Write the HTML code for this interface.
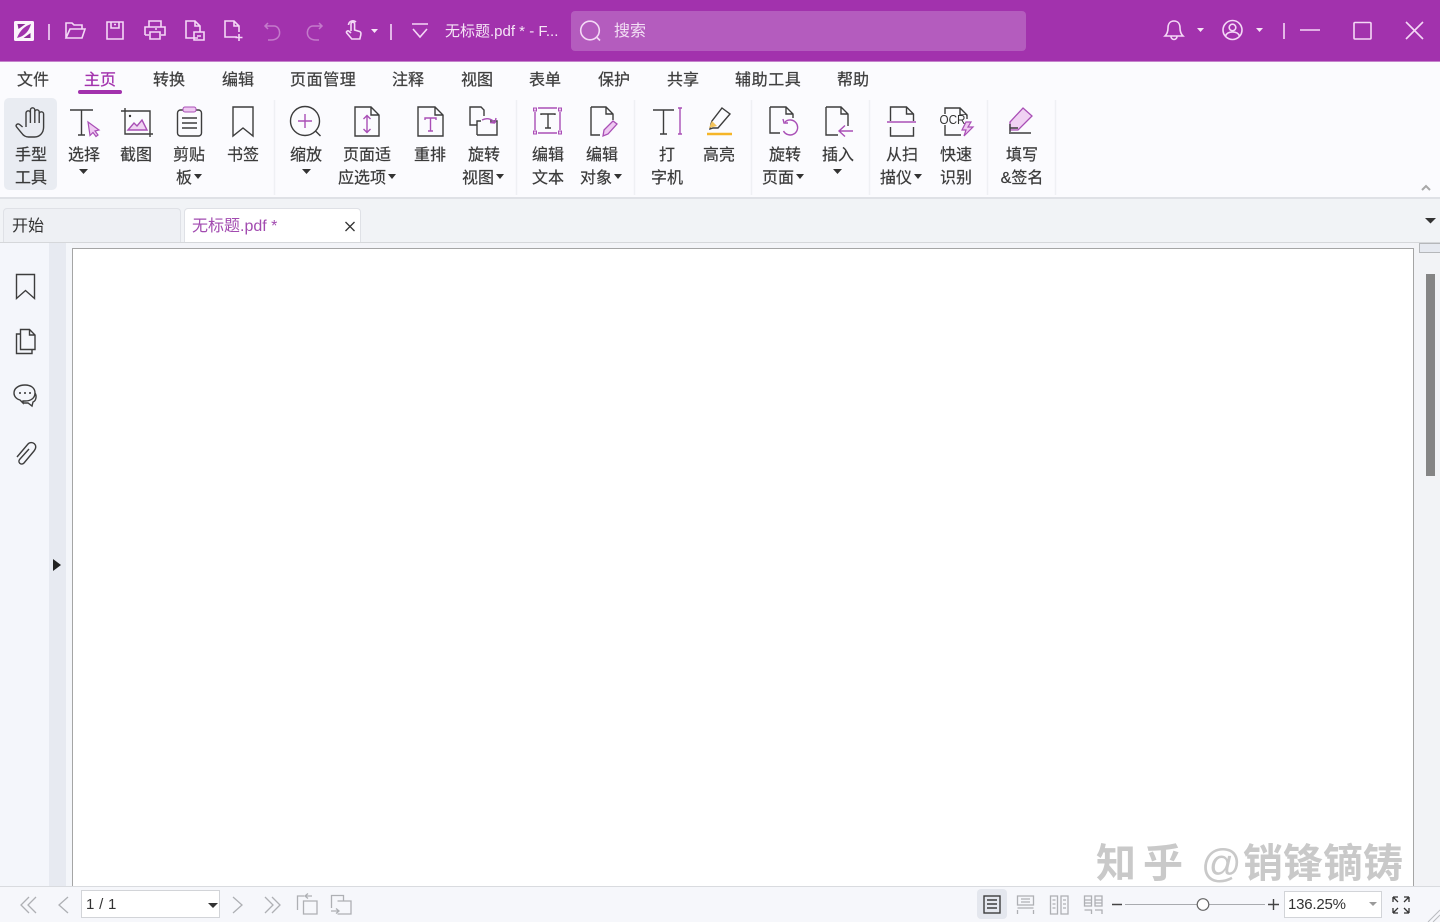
<!DOCTYPE html>
<html lang="zh"><head><meta charset="utf-8"><title>无标题.pdf</title>
<style>
html,body{margin:0;padding:0;width:1440px;height:922px;overflow:hidden;background:#f3f4f8;}
body{position:relative;font-family:"Liberation Sans","Noto Sans CJK SC",sans-serif;color:#333;}
.b{position:absolute;}
.t{position:absolute;font-size:16px;line-height:24px;white-space:nowrap;color:#3a3a3a;transform:translateX(-50%);-webkit-text-stroke:.2px #3a3a3a;}
.m{position:absolute;top:69px;font-size:16px;line-height:24px;white-space:nowrap;color:#3f3f3f;-webkit-text-stroke:.25px #3f3f3f;}
svg{position:absolute;left:0;top:0;}
.d{fill:none;stroke:#3d3d3d;stroke-width:1.4;}
.p{fill:none;stroke:#a94fb6;stroke-width:1.4;}
.w{fill:none;stroke:#f4d8f6;stroke-width:1.6;}
.g{fill:none;stroke:#aeb0b4;stroke-width:1.3;}
.k{fill:#333;stroke:none;}
.wm{position:absolute;top:836px;font-size:40px;line-height:56px;color:#c9c9c9;white-space:nowrap;}
</style></head><body>

<div class="b" style="left:0;top:0;width:1440px;height:61px;background:#a232ad;"></div>
<div class="b" style="left:0;top:61px;width:1440px;height:1px;background:#c583cc;"></div>
<div class="b" style="left:571px;top:11px;width:455px;height:40px;border-radius:4px;background:#b45cbe;"></div>
<div class="b" style="left:445px;top:20px;font-size:15px;line-height:24px;color:#f6e6f7;white-space:nowrap;">无标题.pdf * - F...</div>
<div class="b" style="left:614px;top:20px;font-size:16px;line-height:24px;color:#f3dff5;">搜索</div>

<div class="b" style="left:0;top:62px;width:1440px;height:136px;background:#fbfbfe;"></div>
<div class="b" style="left:0;top:197px;width:1440px;height:2px;background:#dfe1e6;"></div>
<div class="b" style="left:0;top:199px;width:1440px;height:43px;background:#f1f3f6;"></div>
<div class="b" style="left:4px;top:98px;width:53px;height:92px;border-radius:5px;background:#e9ecf2;"></div>
<div class="b" style="left:78px;top:90px;width:44px;height:4px;border-radius:2px;background:#a232ad;"></div>

<div class="m" style="left:17px;">文件</div>
<div class="m" style="left:84px;color:#a232ad;-webkit-text-stroke:.25px #a232ad;">主页</div>
<div class="m" style="left:153px;">转换</div>
<div class="m" style="left:222px;">编辑</div>
<div class="m" style="left:290px;letter-spacing:.6px;">页面管理</div>
<div class="m" style="left:392px;">注释</div>
<div class="m" style="left:461px;">视图</div>
<div class="m" style="left:529px;">表单</div>
<div class="m" style="left:598px;">保护</div>
<div class="m" style="left:667px;">共享</div>
<div class="m" style="left:735px;letter-spacing:.6px;">辅助工具</div>
<div class="m" style="left:837px;">帮助</div>

<div class="t" style="left:31px;top:144px;">手型</div><div class="t" style="left:31px;top:167px;">工具</div>
<div class="t" style="left:84px;top:144px;">选择</div>
<div class="t" style="left:136px;top:144px;">截图</div>
<div class="t" style="left:189px;top:144px;">剪贴</div><div class="t" style="left:184px;top:167px;">板</div>
<div class="t" style="left:243px;top:144px;">书签</div>
<div class="t" style="left:306px;top:144px;">缩放</div>
<div class="t" style="left:367px;top:144px;">页面适</div><div class="t" style="left:362px;top:167px;">应选项</div>
<div class="t" style="left:430px;top:144px;">重排</div>
<div class="t" style="left:484px;top:144px;">旋转</div><div class="t" style="left:478px;top:167px;">视图</div>
<div class="t" style="left:548px;top:144px;">编辑</div><div class="t" style="left:548px;top:167px;">文本</div>
<div class="t" style="left:602px;top:144px;">编辑</div><div class="t" style="left:596px;top:167px;">对象</div>
<div class="t" style="left:667px;top:144px;">打</div><div class="t" style="left:667px;top:167px;">字机</div>
<div class="t" style="left:719px;top:144px;">高亮</div>
<div class="t" style="left:785px;top:144px;">旋转</div><div class="t" style="left:778px;top:167px;">页面</div>
<div class="t" style="left:838px;top:144px;">插入</div>
<div class="t" style="left:902px;top:144px;">从扫</div><div class="t" style="left:896px;top:167px;">描仪</div>
<div class="t" style="left:956px;top:144px;">快速</div><div class="t" style="left:956px;top:167px;">识别</div>
<div class="t" style="left:1022px;top:144px;">填写</div><div class="t" style="left:1022px;top:167px;">&amp;签名</div>

<!-- tabs -->
<div class="b" style="left:3px;top:208px;width:178px;height:34px;background:#eef0f4;border:1px solid #dfe1e6;border-bottom:none;border-radius:4px 4px 0 0;box-sizing:border-box;"></div>
<div class="b" style="left:184px;top:208px;width:177px;height:34px;background:#fff;border:1px solid #dfe1e6;border-bottom:none;border-radius:4px 4px 0 0;box-sizing:border-box;"></div>
<div class="b" style="left:12px;top:215px;font-size:16px;line-height:24px;color:#333;">开始</div>
<div class="b" style="left:192px;top:215px;font-size:16px;line-height:24px;color:#a24bb0;white-space:nowrap;">无标题.pdf *</div>
<div class="b" style="left:0;top:242px;width:1440px;height:1px;background:#d5d7da;"></div>

<!-- body -->
<div class="b" style="left:0;top:243px;width:49px;height:643px;background:#f4f6fb;"></div>
<div class="b" style="left:49px;top:243px;width:17px;height:643px;background:#e7eaf1;"></div>
<div class="b" style="left:66px;top:243px;width:6px;height:643px;background:#f4f6fa;"></div>
<div class="b" style="left:72px;top:248px;width:1342px;height:638px;background:#fff;border:1px solid #a5a5a5;border-bottom:none;box-sizing:border-box;"></div>
<div class="b" style="left:1414px;top:243px;width:26px;height:643px;background:#f2f3f6;"></div>
<div class="b" style="left:1419px;top:243px;width:21px;height:10px;background:#e6e9f0;border:1px solid #b5b7ba;border-right:none;box-sizing:border-box;"></div>
<div class="b" style="left:1426px;top:274px;width:9px;height:202px;background:#858585;"></div>

<!-- watermark -->
<div class="wm" style="left:1096px;letter-spacing:7px;font-weight:700;">知乎</div>
<div class="wm" style="left:1201px;">@</div>
<div class="wm" style="left:1243px;font-weight:700;">销锋镝铸</div>

<!-- status bar -->
<div class="b" style="left:0;top:886px;width:1440px;height:36px;background:#f6f7fb;border-top:1px solid #d9dbdf;box-sizing:border-box;"></div>
<div class="b" style="left:81px;top:890px;width:139px;height:28px;background:#fff;border:1px solid #d2d4d8;box-sizing:border-box;"></div>
<div class="b" style="left:86px;top:893px;font-size:15px;line-height:24px;color:#333;letter-spacing:.3px;">1 / 1</div>
<div class="b" style="left:977px;top:889px;width:30px;height:30px;border-radius:4px;background:#e4e7ee;"></div>
<div class="b" style="left:1284px;top:891px;width:98px;height:27px;background:#fff;border:1px solid #d2d4d8;box-sizing:border-box;"></div>
<div class="b" style="left:1288px;top:893px;font-size:15px;line-height:24px;color:#333;letter-spacing:-.2px;">136.25%</div>

<svg width="1440" height="922" viewBox="0 0 1440 922">
<!-- title bar -->
<rect x="14" y="21" width="20" height="20" rx="1.5" fill="#fbf3fb"/>
<path d="M17 38C20 30 25 26 31 24C29 31 25 36 17 38z" fill="#a232ad"/>
<path d="M17.500 24h8l-7 5z" fill="#8e2a98"/>
<path d="M30.500 33v5h-7z" fill="#8e2a98"/>
<path class="w" d="M49 24v16"/>
<path class="w" d="M66 38V23h6l2 2h8v4M66 38l4-9h15l-3 9z"/>
<path class="w" d="M107 22h16v17h-16zM111 22v6h8v-6M114 24.500h2"/>
<path class="w" d="M149 27v-6h12v6M145 35v-8h20v8h-4M149 35h-4M150 32h10v7h-10zM155 29h2"/>
<path class="w" d="M198 38h-12V21h9l5 5v6M195 21v5h5M194 32h10v8h-10zM197 36h4"/>
<path class="w" d="M237 37h-12V21h9l5 5v6M234 21v5h5M239 34v7M235.500 37.500h7"/>
<path d="M268 23l-3 3 3 3M266 26h8c7 0 9 14-3 14h-3" fill="none" stroke="#c47bcb" stroke-width="1.500"/>
<path d="M319 23l3 3-3 3M321 26h-8c-7 0-9 14 3 14h3" fill="none" stroke="#c47bcb" stroke-width="1.500"/>
<path class="w" d="M351 31v-7a1.800 1.800 0 013.600 0v6l5 1.500c1.500.5 1.500 2 1.200 3.500l-1 4h-8l-5-6c-1-1.500 1-3 2.500-1.500l1.700 1.500M348.500 25a4.500 4.500 0 017.500-3"/>
<path d="M371 29h7l-3.500 4z" fill="#f6e6f7"/>
<path class="w" d="M391 24v16"/>
<path class="w" d="M412 24h16M413 29l7 8 7-8"/>
<circle cx="590" cy="30.500" r="9.300" class="w"/><path class="w" d="M597 37.500l3 3"/>
<!-- right title -->
<path class="w" d="M1174 21c-4 0-6 3-6 7 0 4-1 6-3 8h18c-2-2-3-4-3-8 0-4-2-7-6-7zM1171 36.500a3 3 0 006 0"/>
<path d="M1197 28h7l-3.500 4z" fill="#f6e6f7"/>
<circle cx="1232.500" cy="30" r="9.500" class="w"/><circle cx="1232.500" cy="27.500" r="3.300" class="w"/><path class="w" d="M1225.500 36c1-3 4-4 7-4s6 1 7 4"/>
<path d="M1256 28h7l-3.500 4z" fill="#f6e6f7"/>
<path class="w" d="M1284 23v16M1300 30h20"/>
<rect x="1354" y="22.500" width="17" height="16.500" rx="1" class="w"/>
<path class="w" d="M1406 22l17 17M1423 22l-17 17"/>

<!-- ribbon seps -->
<path stroke="#eff0f4" stroke-width="1.500" d="M274.500 100v95M516.500 100v95M634.500 100v95M751.500 100v95M869.500 100v95M987.500 100v95M1055.500 100v95"/>

<!-- hand -->
<path class="d" d="M26 127V113a2.200 2.200 0 014.400 0V110a2.200 2.200 0 014.400 0V112a2.200 2.200 0 014.400 0V114a2.200 2.200 0 014.400 0V127c0 6-4 10-9 10h-6c-3 0-5-1-7-4l-5-6c-1.500-2 1-4 3-2.500l3 2.500M30.400 113v10M34.800 111v12M39.200 113v10"/>
<!-- select -->
<path class="d" d="M70 110h23M81.500 110v25M78 135h7"/>
<path d="M88 122l11 8-4 1 3 4-2 1.500-3-4-3 3z" fill="#efc9f2" stroke="#a94fb6" stroke-width="1.200"/>
<!-- screenshot -->
<path class="d" d="M125 108v26h28M121 111h29v26"/>
<path class="p" fill="#efd5f2" style="fill:#efd5f2" d="M128 130l6-7 3 3 5-6 5 10z"/>
<circle cx="130" cy="116" r="1.200" class="k"/>
<!-- clipboard -->
<rect x="177.500" y="110" width="24" height="26" rx="3" class="d"/>
<rect x="183" y="107" width="13" height="5" rx="2" fill="#efc9f2" stroke="#a94fb6"/>
<path class="d" d="M182 118h15M182 123h15M182 128h15"/>
<!-- bookmark -->
<path class="d" d="M233 107h20v29l-10-8-10 8z"/>
<!-- zoom -->
<circle cx="305" cy="121" r="14.500" class="d"/><path class="d" d="M315.500 131l5 5"/>
<path class="p" d="M305 114v14M298 121h14"/>
<!-- page fit -->
<path class="d" d="M355 107h16l8 8v21h-24zM371 107v8h8"/>
<path class="p" d="M367 116v16M363.500 119l3.500-3.500 3.500 3.500M363.500 129l3.500 3.500 3.500-3.500"/>
<!-- reflow -->
<path class="d" d="M418 107h17l8 8v21h-25zM435 107v8h8"/>
<path class="p" d="M425 120v-2h11v2M430.500 118v13M428 131h5"/>
<!-- rotate view -->
<path class="d" d="M477 125h-7v-18h11l3 3v6M477 135v-14h4M490 121h7v14h-20"/>
<path class="p" d="M482 120c4-2 9-2 13 3M495 123l1-5M495 123l-5-.5"/>
<!-- edit text -->
<path class="p" d="M535 112v18M560 112v18M538 108h19M538 133h19"/>
<rect x="533.500" y="108" width="3" height="3" fill="#efc9f2" stroke="#a94fb6"/><rect x="558.500" y="108" width="3" height="3" fill="#efc9f2" stroke="#a94fb6"/><rect x="533.500" y="131" width="3" height="3" fill="#efc9f2" stroke="#a94fb6"/><rect x="558.500" y="131" width="3" height="3" fill="#efc9f2" stroke="#a94fb6"/>
<path class="d" d="M541 115v-1h14v1M548 114v14M545 128h6"/>
<!-- edit object -->
<path class="d" d="M591 107h15l7 7v6M606 107v7h7M600 135h-9v-28"/>
<path d="M604 130l9-9 4 3-9 10-5 2z" fill="#efc9f2" stroke="#a94fb6" stroke-width="1.300"/>
<!-- typewriter -->
<path class="d" d="M653 110h21M663.500 110v24M660 134h7"/>
<path class="p" d="M678 108h4M678 134h4M680 108v26"/>
<!-- highlight -->
<path class="d" d="M722 108l8 6-12 14h-5l-3 1 1-5 1-3z"/>
<path d="M709 128l3-7 5 5z" fill="#f3c45c"/>
<path stroke="#f5b528" stroke-width="2.400" d="M707 134h25"/>
<!-- rotate page -->
<path class="d" d="M770 107h16l7 7v4M786 107v7h7M780 133h-10v-26"/>
<path class="p" d="M785 122a7.500 7.500 0 11-1.500 9M783 119l1 4h4" stroke-width="1.500"/>
<!-- insert -->
<path class="d" d="M826 107h15l7 7v12M841 107v7h7M838 135h-12v-28"/>
<path class="p" d="M853 131h-14M845 125.500l-6 5.500 6 5.500" stroke-width="1.500"/>
<!-- scan -->
<path class="d" d="M890.500 121v-14h16l7 7v7M906.500 107v7h7M890.500 127v9h23v-9"/>
<path class="p" d="M887 122h29" stroke-width="1.600"/>
<!-- ocr -->
<path class="d" d="M945 114v-6h15l7 7v4M960 108v7h7M945 125v10h16"/>
<rect x="939" y="115" width="27" height="9" fill="#fbfbfe"/>
<text x="939.500" y="124" font-family="Liberation Sans" font-size="12.500" fill="#333" textLength="26" lengthAdjust="spacingAndGlyphs">OCR</text>
<path d="M966 122l-4 8h4l-2 6 9-9h-5l3-5z" fill="#efc9f2" stroke="#a94fb6" stroke-width="1.200"/>
<!-- fill sign -->
<path d="M1023 108l9 8-14 14h-8v-8z" fill="#f0d2f3" stroke="#a94fb6" stroke-width="1.300"/>
<path class="d" d="M1010 124v8M1009 133h22M1010 128h8"/>

<!-- carets -->
<path class="k" d="M79 169h9l-4.500 5zM302 169h9l-4.500 5zM833 169h9l-4.500 5zM194 174h8l-4 5zM388 174h8l-4 5zM496 174h8l-4 5zM614 174h8l-4 5zM796 174h8l-4 5zM914 174h8l-4 5z"/>
<path d="M1422 190l4-4 4 4" fill="none" stroke="#a8a8a8" stroke-width="2"/>
<path class="k" d="M1425 218h11l-5.500 5.500z"/>
<path d="M345.500 222l9 9M354.500 222l-9 9" fill="none" stroke="#333" stroke-width="1.300"/>

<!-- sidebar -->
<path class="d" d="M16.500 274.500h18v24l-9-8-9 8z"/>
<path class="d" d="M20.500 349.500v-20h9l5.500 5.500v14.500zM29.500 329.500v5.500h5.500M20.500 334h-4v19.500h15.500v-4"/>
<path class="d" d="M25 385c-6 0-11 3-11 8 0 3 2 6 6 7l3 3v-2h2c6 0 10-3 10-8s-4-8-10-8zM35 393c2 3 1 8-2 9l-1 4-4-3h-5"/>
<circle cx="20" cy="393" r="1" class="k"/><circle cx="25" cy="393" r="1" class="k"/><circle cx="30" cy="393" r="1" class="k"/>
<path class="d" d="M29 449l-9 10c-3 3 1 7 4 4l10-12c5-6-2-11-6-7l-11 13"/>
<path d="M53 559v12l8-6z" fill="#222"/>

<!-- status icons -->
<path class="g" d="M36 897l-8 8 8 8M29 897l-8 8 8 8M68 897l-9 8 9 8M233 897l9 8-9 8M265 897l8 8-8 8M272 897l8 8-8 8"/>
<path class="k" d="M208 903h10l-5 5z"/>
<path class="g" d="M297.500 910v-14h7M303.500 901h13.500v13h-13.500zM305 896h7M305 896l3-2.500M305 896l3 2.500"/>
<path class="g" d="M331.500 908v-12.500h12v5M337.500 901h13.500v13h-13.500M331 911h8M336 908.500l3 2.500-3 2.500"/>
<rect x="984" y="896" width="16" height="17" class="d"/><path class="d" d="M987 900h10M987 904h10M987 908h10"/>
<path class="g" d="M1017.500 896h16v9h-16zM1017.500 910v4M1033.500 910v4M1017.500 908h16M1021 899h9M1021 902h9"/>
<path class="g" d="M1050.500 896h7v18h-7zM1061 896h7v18h-7zM1052.500 900h3M1052.500 904h3M1052.500 908h3M1063 900h3M1063 904h3M1063 908h3"/>
<path class="g" d="M1084.500 896h7v10h-7zM1095 896h7v10h-7zM1084.500 910h7v4M1095 910h7v4M1084.500 900h7M1095 900h7M1084.500 903h7M1095 903h7"/>
<path d="M1112 904.500h10M1268 904.500h11M1273.500 899v11" stroke="#444" stroke-width="1.400"/>
<path d="M1125 904.500h140" stroke="#a9abaf" stroke-width="1"/>
<circle cx="1203" cy="904.500" r="5.800" fill="#fff" stroke="#666" stroke-width="1.200"/>
<path d="M1369 902h8l-4 4z" fill="#9a9a9a"/>
<path d="M1393 897h5M1393 897v5M1393 897l5 5M1409 897h-5M1409 897v5M1409 897l-5 5M1393 913h5M1393 913v-5M1393 913l5-5M1409 913h-5M1409 913v-5M1409 913l-5-5" fill="none" stroke="#333" stroke-width="1.300"/>
<path d="M1428 922l12-12M1433 922l7-7" stroke="#b9bbbf" stroke-width="1"/>
</svg>
</body></html>
